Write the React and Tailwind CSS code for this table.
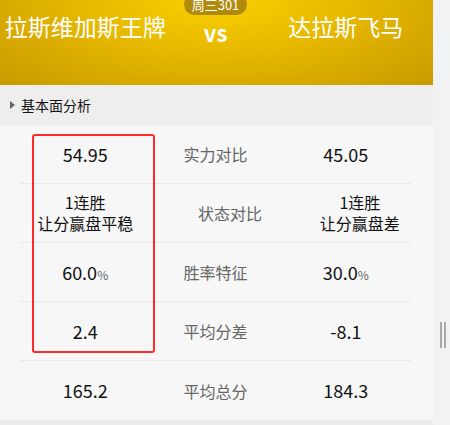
import React from 'react';

const rows = [
  { left: '54.95', label: '实力对比', right: '45.05' },
  { left: ['1连胜', '让分赢盘平稳'], label: '状态对比', right: ['1连胜', '让分赢盘差'], shift: true },
  { left: '60.0', label: '胜率特征', right: '30.0', pct: true },
  { left: '2.4', label: '平均分差', right: '-8.1' },
  { left: '165.2', label: '平均总分', right: '184.3' },
];

function Value({ v, pct }) {
  if (Array.isArray(v)) {
    return (
      <div className="text-[16px] leading-[21px] text-[#111] text-center">
        {v.map((line) => (
          <div key={line}>{line}</div>
        ))}
      </div>
    );
  }
  return (
    <span className="text-[18px] text-[#111]">
      {v}
      {pct && <span className="text-[12px] text-[#666]">%</span>}
    </span>
  );
}

export default function App() {
  return (
    <div
      className="relative w-[450px] h-[425px] overflow-hidden bg-[#f1f2f4]"
      style={{ fontFamily: '"Noto Sans CJK SC", "Noto Sans", sans-serif' }}
    >
      <div className="w-[433px]">
        {/* Header */}
        <div className="relative h-[85px] bg-[radial-gradient(ellipse_at_50%_0%,#fbd000_0%,#e6b800_45%,#c89a00_100%)]">
          <div className="absolute left-[184px] top-[-6px] w-[63px] h-[21px] rounded-full bg-[#b08a0c] flex items-center justify-center text-white text-[13px] leading-none">
            周三301
          </div>
          <div className="grid grid-cols-3 px-5 pt-[11px] w-[433px] pr-[22px]">
            <div className="flex justify-center whitespace-nowrap text-white text-[23px] leading-[30px]">拉斯维加斯王牌</div>
            <div className="flex justify-center text-white text-[22px] font-bold leading-[30px] pt-[6px]">vs</div>
            <div className="flex justify-center whitespace-nowrap text-white text-[23px] leading-[30px]">达拉斯飞马</div>
          </div>
        </div>

        {/* Section title */}
        <div className="h-[40px] bg-[#eeeeee] flex items-center pl-[10px]">
          <div className="w-0 h-0 border-y-[4px] border-y-transparent border-l-[5px] border-l-[#666] mr-[6px]" />
          <span className="text-[14px] text-[#111]">基本面分析</span>
        </div>

        {/* Rows */}
        <div className="relative bg-[#f7f7f7] pl-5 pr-[22px]">
          {rows.map((r, i) => (
            <div
              key={r.label}
              className={`grid grid-cols-3 items-center h-[59px] ${i < rows.length - 1 ? 'border-b border-[#e8e8e8]' : ''}`}
            >
              <div className="flex justify-center">
                <Value v={r.left} pct={r.pct} />
              </div>
              <div className={`flex justify-center text-[16px] text-[#666] ${r.shift ? 'pl-[29px]' : ''}`}>{r.label}</div>
              <div className={`flex justify-center ${r.shift ? 'pl-[28px]' : ''}`}>
                <Value v={r.right} pct={r.pct} />
              </div>
            </div>
          ))}
          <div className="absolute left-[32px] top-[9px] w-[123px] h-[219px] border-2 border-[#ff2a2a] rounded-[3px]" />
        </div>
        <div className="h-[10px] bg-[#ececec]" />
      </div>

      {/* resize handle */}
      <div className="absolute left-[440px] top-[322px] flex gap-[2px]">
        <div className="w-[2px] h-[26px] bg-[#a8a8a8]" />
        <div className="w-[2px] h-[26px] bg-[#a8a8a8]" />
      </div>
    </div>
  );
}
